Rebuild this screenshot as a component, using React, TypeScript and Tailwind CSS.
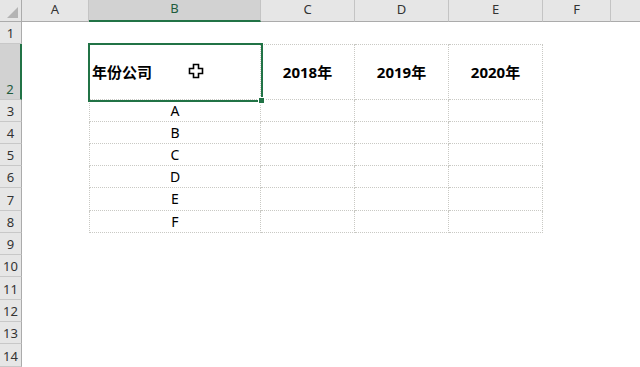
import React from 'react';

const cols = ['A', 'B', 'C', 'D', 'E', 'F', 'G'];
const colWidths = [67, 172, 94, 94, 94, 68, 68];
const rowHeights = [22, 56, 22, 22, 22, 22, 23, 22, 22, 22, 23, 22, 22, 23];

const years = ['2018年', '2019年', '2020年'];
const companies = ['A', 'B', 'C', 'D', 'E', 'F'];

function Cursor() {
  return (
    <svg width="16" height="16" viewBox="0 0 16 16" className="absolute left-[188px] top-[63px]">
      <path
        d="M5.5 1.5h5v4h4v5h-4v4h-5v-4h-4v-5h4z"
        fill="#ffffff"
        stroke="#000000"
        strokeWidth="1.6"
        strokeLinejoin="miter"
      />
    </svg>
  );
}

function cellContent(row: number, col: number) {
  // row/col are 1-based sheet coordinates, col 1 = A
  if (row === 2 && col === 2) {
    return <span className="pl-[2px] font-bold text-[15px]">年份公司</span>;
  }
  if (row === 2 && col >= 3 && col <= 5) {
    return <span className="w-full text-center font-bold text-[15px]">{years[col - 3]}</span>;
  }
  if (row >= 3 && row <= 8 && col === 2) {
    return <span className="w-full text-center text-[14px] pb-[1px]">{companies[row - 3]}</span>;
  }
  return null;
}

function cellBorder(row: number, col: number) {
  const inTable = row >= 2 && row <= 8 && col >= 2 && col <= 5;
  if (!inTable) return '';
  let cls = 'border-dotted border-[#c9c9c4] border-r border-b';
  if (col === 2) cls += ' border-l';
  if (row === 2) cls += ' border-t';
  return cls;
}

export default function App() {
  const gridCols = `22px ${colWidths.map((w) => `${w}px`).join(' ')}`;
  const gridRows = `22px ${rowHeights.map((h) => `${h}px`).join(' ')}`;

  return (
    <div
      className="relative w-[640px] h-[367px] overflow-hidden bg-white text-[#000]"
      style={{ fontFamily: '"Noto Sans", "Noto Sans CJK SC", sans-serif' }}
    >
      <div className="grid" style={{ gridTemplateColumns: gridCols, gridTemplateRows: gridRows }}>
        {/* corner */}
        <div className="relative bg-[#e6e6e6] border-b border-r border-[#ababab]">
          <div className="absolute right-[3px] bottom-[3px] w-0 h-0 border-l-[11px] border-l-transparent border-b-[11px] border-b-[#b4b4b4]" />
        </div>
        {cols.map((c, i) => (
          <div
            key={c}
            className={`flex items-center justify-center text-[13px] pb-[2px] ${
              c === 'B'
                ? 'bg-[#d2d2d2] border-b-2 border-[#217346] text-[#1f5c3c]'
                : 'bg-[#e6e6e6] border-b border-[#ababab] text-[#333]'
            } ${i < cols.length - 1 ? 'border-r border-r-[#c4c4c4]' : ''}`}
          >
            {c}
          </div>
        ))}

        {rowHeights.map((_, ri) => {
          const row = ri + 1;
          return (
            <React.Fragment key={row}>
              <div
                className={`flex items-end justify-center text-[13px] leading-none pb-[3px] border-b border-[#c8c8c8] ${
                  row === 2
                    ? 'bg-[#d2d2d2] border-r-2 border-r-[#217346] text-[#1f5c3c]'
                    : 'bg-[#e6e6e6] border-r border-r-[#ababab] text-[#333]'
                }`}
              >
                {row}
              </div>
              {cols.map((_, ci) => {
                const col = ci + 1;
                return (
                  <div key={col} className={`flex items-center overflow-visible whitespace-nowrap ${cellBorder(row, col)}`}>
                    {cellContent(row, col)}
                  </div>
                );
              })}
            </React.Fragment>
          );
        })}
      </div>

      {/* selection around B2 */}
      <div className="absolute left-[88px] top-[43px] w-[175px] h-[59px] border-2 border-[#217346] pointer-events-none" />
      <div className="absolute left-[258px] top-[97px] w-[7px] h-[7px] bg-[#217346] border border-white" />

      <Cursor />
    </div>
  );
}
